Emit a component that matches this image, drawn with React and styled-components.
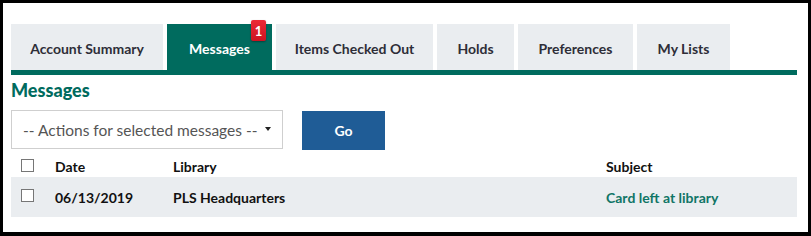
import React from "react";
import styled, { createGlobalStyle } from "styled-components";

const Global = createGlobalStyle`
  html, body { margin: 0; padding: 0; background: #fff; }
  body { font-family: Lato, "Open Sans", sans-serif; }
  * { box-sizing: border-box; }
`;

const GREEN = "#006b5e";
const GRAY = "#eaedf0";

const Frame = styled.div`
  width: 811px;
  height: 236px;
  border: 3px solid #000;
  border-bottom-width: 4px;
  padding: 21px 11px 0 8px;
  background: #fff;
`;

const TabBar = styled.nav`
  display: flex;
  gap: 4px;
  height: 51px;
  border-bottom: 5px solid ${GREEN};
`;

const Tab = styled.div`
  position: relative;
  display: flex;
  align-items: center;
  justify-content: center;
  height: 46px;
  width: ${(p) => p.$w}px;
  background: ${(p) => (p.$active ? GREEN : GRAY)};
  color: ${(p) => (p.$active ? "#fff" : "#2e2e38")};
  font-size: 14px;
  font-weight: 700;
  padding-top: 3px;
`;

const Badge = styled.span`
  position: absolute;
  top: -4px;
  right: 6px;
  width: 15px;
  height: 21px;
  border-radius: 2px;
  background: linear-gradient(#ec2a36, #cc1221);
  box-shadow: 0 1px 2px rgba(0, 0, 0, 0.35);
  color: #fff;
  font-size: 13px;
  font-weight: 700;
  display: flex;
  align-items: center;
  justify-content: center;
`;

const Heading = styled.h2`
  margin: 0;
  padding-top: 4px;
  height: 35px;
  color: ${GREEN};
  font-size: 18px;
  font-weight: 900;
  line-height: 22px;
`;

const Actions = styled.div`
  display: flex;
  align-items: flex-start;
  gap: 19px;
  height: 45px;
`;

const Select = styled.div`
  width: 272px;
  height: 39px;
  border: 1px solid #cfcfcf;
  display: flex;
  align-items: center;
  justify-content: space-between;
  padding: 0 11px 0 11px;
  color: #555;
  font-size: 15.5px;
`;

const Caret = styled.span`
  width: 0;
  height: 0;
  border-left: 3.5px solid transparent;
  border-right: 3.5px solid transparent;
  border-top: 4px solid #222;
  margin-top: -2px;
`;

const GoButton = styled.button`
  margin-top: 1px;
  width: 83px;
  height: 39px;
  border: 0;
  background: #1f5c96;
  color: #fff;
  font-family: inherit;
  font-size: 14px;
  font-weight: 700;
`;

const Row = styled.div`
  display: grid;
  grid-template-columns: 34px 118px 433px 1fr;
  align-items: center;
  padding-left: 10px;
  height: ${(p) => (p.$head ? 22 : 40)}px;
  background: ${(p) => (p.$head ? "transparent" : GRAY)};
  color: #111;
  font-size: 14px;
  font-weight: 700;
`;

const Check = styled.span`
  display: block;
  width: 13px;
  height: 13px;
  border: 1px solid #767676;
  background: #fff;
  margin-top: ${(p) => (p.$head ? -2 : -3)}px;
`;

const Cell = styled.span`
  white-space: nowrap;
`;

const SubjectLink = styled.a`
  color: #107566;
  text-decoration: none;
`;

const tabs = [
  ["Account Summary", 152],
  ["Messages", 105, true],
  ["Items Checked Out", 157],
  ["Holds", 77],
  ["Preferences", 115],
  ["My Lists", 93],
];

export default function App() {
  return (
    <>
      <Global />
      <Frame>
        <TabBar>
          {tabs.map(([label, w, active]) => (
            <Tab key={label} $w={w} $active={active}>
              {label}
              {active && <Badge>1</Badge>}
            </Tab>
          ))}
        </TabBar>
        <Heading>Messages</Heading>
        <Actions>
          <Select>
            -- Actions for selected messages --
            <Caret />
          </Select>
          <GoButton>Go</GoButton>
        </Actions>
        <Row $head>
          <Check $head />
          <Cell>Date</Cell>
          <Cell>Library</Cell>
          <Cell>Subject</Cell>
        </Row>
        <Row>
          <Check />
          <Cell>06/13/2019</Cell>
          <Cell>PLS Headquarters</Cell>
          <Cell>
            <SubjectLink href="#">Card left at library</SubjectLink>
          </Cell>
        </Row>
      </Frame>
    </>
  );
}
